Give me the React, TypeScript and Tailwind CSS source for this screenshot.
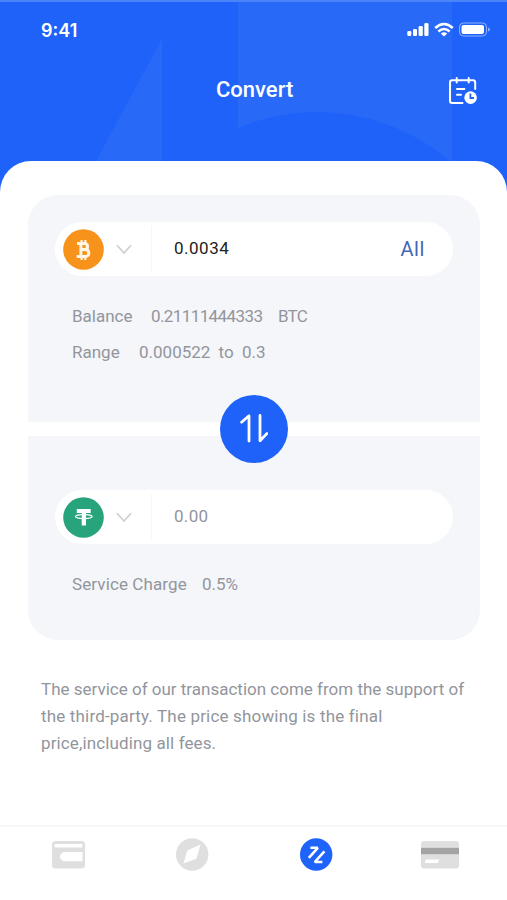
import type { ReactNode } from "react";

function StatusIcons() {
  return (
    <svg width="84" height="16" viewBox="0 0 84 16" fill="none">
      <g fill="white">
        <rect x="0.3" y="9" width="4" height="5" rx="1.2" />
        <rect x="6" y="7" width="4" height="7" rx="1.2" />
        <rect x="11.6" y="4" width="4.2" height="10" rx="1.2" />
        <rect x="17.3" y="1" width="4.2" height="13" rx="1.2" />
      </g>
      <g stroke="white" strokeWidth="2.6">
        <path d="M28.2 6 Q37 -2 45.8 6" />
        <path d="M31.4 9.4 Q37 4.6 42.6 9.4" />
      </g>
      <path d="M33.8 11.6 Q37 9 40.2 11.6 L37 14.4 Z" fill="white" />
      <rect x="52.5" y="1" width="27" height="13" rx="4" stroke="white" strokeOpacity="0.5" />
      <rect x="54.5" y="3" width="22.5" height="9" rx="2" fill="white" />
      <path d="M81 5.4 Q83 6 83 7.5 Q83 9 81 9.6 Z" fill="white" fillOpacity="0.5" />
    </svg>
  );
}

function HistoryIcon() {
  return (
    <svg width="30" height="30" viewBox="0 0 30 30" fill="none">
      <g stroke="white" strokeWidth="2" strokeLinecap="round">
        <path d="M14.5 27 H4.2 Q2 27 2 24.8 V6.4 Q2 4.2 4.2 4.2 H25 Q27.2 4.2 27.2 6.4 V13" />
        <path d="M8.7 2 V6.6 M20.7 2 V6.6" />
        <path d="M9 13.1 H16.4 M9 18.7 H13" />
      </g>
      <circle cx="22.6" cy="21.6" r="6.3" fill="white" />
      <path d="M22.4 17.6 V22 H26" stroke="#2064f8" strokeWidth="1.8" />
    </svg>
  );
}

function Chevron() {
  return (
    <svg width="16" height="11" viewBox="0 0 16 11" fill="none">
      <path d="M1 1.2 L8 9 L15 1.2" stroke="#cdced2" strokeWidth="1.7" />
    </svg>
  );
}

function BitcoinIcon() {
  return (
    <svg width="41" height="41" viewBox="0 0 41 41" fill="none">
      <circle cx="20.5" cy="20.5" r="20.3" fill="#f7931a" />
      <g stroke="#fff6e5" strokeWidth="2.1">
        <path d="M18.6 11 V14.2 M22.3 11 V14.2 M18.6 27.7 V31 M22.3 27.7 V31" />
      </g>
      <g stroke="#fff6e5" strokeWidth="3">
        <path d="M14 14.4 H21.4 C25.6 14.4 25.6 20.6 21.4 20.6 H18 M21.6 20.6 C27.2 20.6 27.2 27.6 21.8 27.6 H13.6 M17.9 14.4 V27.6" />
      </g>
    </svg>
  );
}

function TetherIcon() {
  return (
    <svg width="41" height="41" viewBox="0 0 41 41" fill="none">
      <circle cx="20.5" cy="20.5" r="20.3" fill="#28a47c" />
      <path d="M13.8 12 H27.7 V16 H23 V28.5 H18.7 V16 H13.8 Z" fill="white" />
      <path
        d="M18.8 17.6 C10 18 10 21.4 20.8 21.6 C31.6 21.4 31.6 18 22.9 17.6"
        stroke="white"
        strokeWidth="1.2"
      />
    </svg>
  );
}

function SwapIcon() {
  return (
    <svg width="28" height="30" viewBox="0 0 28 30" fill="none" stroke="white" strokeWidth="2.8">
      <path d="M1.6 8.2 L9 1.8 V27" strokeLinecap="round" strokeLinejoin="round" />
      <path d="M20 1.4 V26.8 L26.8 19.6" strokeLinecap="round" strokeLinejoin="round" />
    </svg>
  );
}

function WalletIcon() {
  return (
    <svg width="33" height="30" viewBox="0 -2 33 30">
      <rect width="33" height="27.5" rx="3.5" fill="#dfdfdf" />
      <rect x="2.5" y="3" width="28" height="3.5" rx="0.8" fill="white" />
      <path d="M11.5 11 H30.5 V20.3 H11.5 Q8 18.5 8 15.6 Q8 12.8 11.5 11 Z" fill="white" />
    </svg>
  );
}

function CompassIcon() {
  return (
    <svg width="33" height="33" viewBox="0 0 33 33">
      <circle cx="16.2" cy="16.5" r="16.2" fill="#dfdfdf" />
      <path d="M24.6 6.6 L20.9 19.3 Q20.4 20.6 19.1 21.2 L7.4 25.4 L10.9 13.7 Q11.4 12.3 12.8 11.7 Z" fill="white" />
    </svg>
  );
}

function ConvertIcon() {
  return (
    <svg width="33" height="33" viewBox="0 0 33 33" fill="none">
      <circle cx="16.2" cy="16.5" r="16.2" fill="#1e63fa" />
      <g stroke="white" strokeWidth="2.6">
        <path d="M10.4 9.8 H17.8 L8.8 19.8" strokeLinejoin="bevel" />
        <path d="M24.4 13.4 L14.8 24 H22.4" strokeLinejoin="bevel" />
      </g>
    </svg>
  );
}

function CardIcon() {
  return (
    <svg width="38" height="30" viewBox="0 -2 38 30">
      <rect width="38" height="27.5" rx="3" fill="#dfdfdf" />
      <rect y="6.8" width="38" height="6.4" fill="#a3a3a3" />
      <path d="M4.8 18.6 H18.4 L16.6 21.9 H3.8 Z" fill="white" />
    </svg>
  );
}

function CoinField({ icon, children }: { icon: ReactNode; children: ReactNode }) {
  return (
    <div className="flex h-[54px] items-center rounded-full bg-white pl-2 pr-7">
      {icon}
      <button className="ml-3 mt-px">
        <Chevron />
      </button>
      <div className="ml-[19px] mr-[22px] h-[46px] w-px bg-[#f6f7f9]" />
      {children}
    </div>
  );
}

const tabs = [
  { name: "wallet", icon: <WalletIcon />, width: "w-[136px]" },
  { name: "discover", icon: <CompassIcon />, width: "w-[112px]" },
  { name: "convert", icon: <ConvertIcon />, width: "w-[136px]" },
  { name: "card", icon: <CardIcon />, width: "w-[112px]" },
];

export default function App() {
  return (
    <div className="flex h-[900px] w-[507px] flex-col overflow-hidden bg-white font-['Roboto',sans-serif]">
      <header className="relative h-[195px] shrink-0 border-t-2 border-[#4b83fa] bg-[#1e62f9] text-white">
        <svg className="absolute left-0 top-0" width="507" height="193" viewBox="0 2 507 193">
          <path d="M162 39 L95 163 H162 Z" fill="#2869f8" />
          <path d="M238 0 H452 V163 A204 204 0 0 0 238 128 Z" fill="#2869f8" />
        </svg>
        <div className="relative flex h-[56px] items-center justify-between pl-[41px] pr-[16px]">
          <span className="font-['Inter',sans-serif] text-[18px] font-semibold">9:41</span>
          <StatusIcons />
        </div>
        <div className="relative flex h-[66px] items-center justify-between pl-[216px] pr-[29px]">
          <h1 className="-mt-1 text-[22px] font-medium">Convert</h1>
          <HistoryIcon />
        </div>
      </header>

      <main className="relative -mt-[34px] flex-1 rounded-t-[31px] bg-white pl-7 pr-[27px] pt-[34px] text-[17px] text-[#92959c]">
        <section className="h-[227px] rounded-t-[30px] bg-[#f4f6fa] px-[27px] pt-[27px]">
          <CoinField icon={<BitcoinIcon />}>
            <span className="flex-1 tracking-[0.5px] text-[#222]">0.0034</span>
            <button className="text-[20px] tracking-[0.6px] text-[#4266b5]">All</button>
          </CoinField>
          <div className="mt-[23px] flex h-9 items-center pl-[17px]">
            <span className="w-[79px]">Balance</span>
            <span className="w-[127px] tracking-[-0.6px]">0.21111444333</span>
            <span className="tracking-[-0.8px]">BTC</span>
          </div>
          <div className="flex h-9 items-center pl-[17px]">
            <span className="w-[67px]">Range</span>
            <span className="[word-spacing:4px]">0.000522 to 0.3</span>
          </div>
        </section>

        <div className="flex h-[14px] items-center justify-center">
          <button className="z-10 flex size-[68px] shrink-0 items-center justify-center rounded-full bg-[#1e62f9]">
            <SwapIcon />
          </button>
        </div>

        <section className="h-[204px] rounded-b-[30px] bg-[#f4f6fa] px-[27px] pt-[54px]">
          <CoinField icon={<TetherIcon />}>
            <span className="tracking-[0.3px]">0.00</span>
          </CoinField>
          <div className="mt-[23px] flex h-9 items-center pl-[17px]">
            <span className="w-[130px] tracking-[0.1px]">Service Charge</span>
            <span>0.5%</span>
          </div>
        </section>

        <p className="ml-[13px] mt-[36px] whitespace-nowrap leading-[27px]">
          The service of our transaction come from the support of
          <br />
          <span className="tracking-[0.17px]">the third-party. The price showing is the final</span>
          <br />
          <span className="tracking-[0.12px]">price,including all fees.</span>
        </p>
      </main>

      <nav className="flex h-[75px] shrink-0 border-t-2 border-[#f8f8f8] pt-[11px]">
        {tabs.map((tab) => (
          <button key={tab.name} className={`flex h-8 items-center justify-center ${tab.width}`}>
            {tab.icon}
          </button>
        ))}
      </nav>
    </div>
  );
}
